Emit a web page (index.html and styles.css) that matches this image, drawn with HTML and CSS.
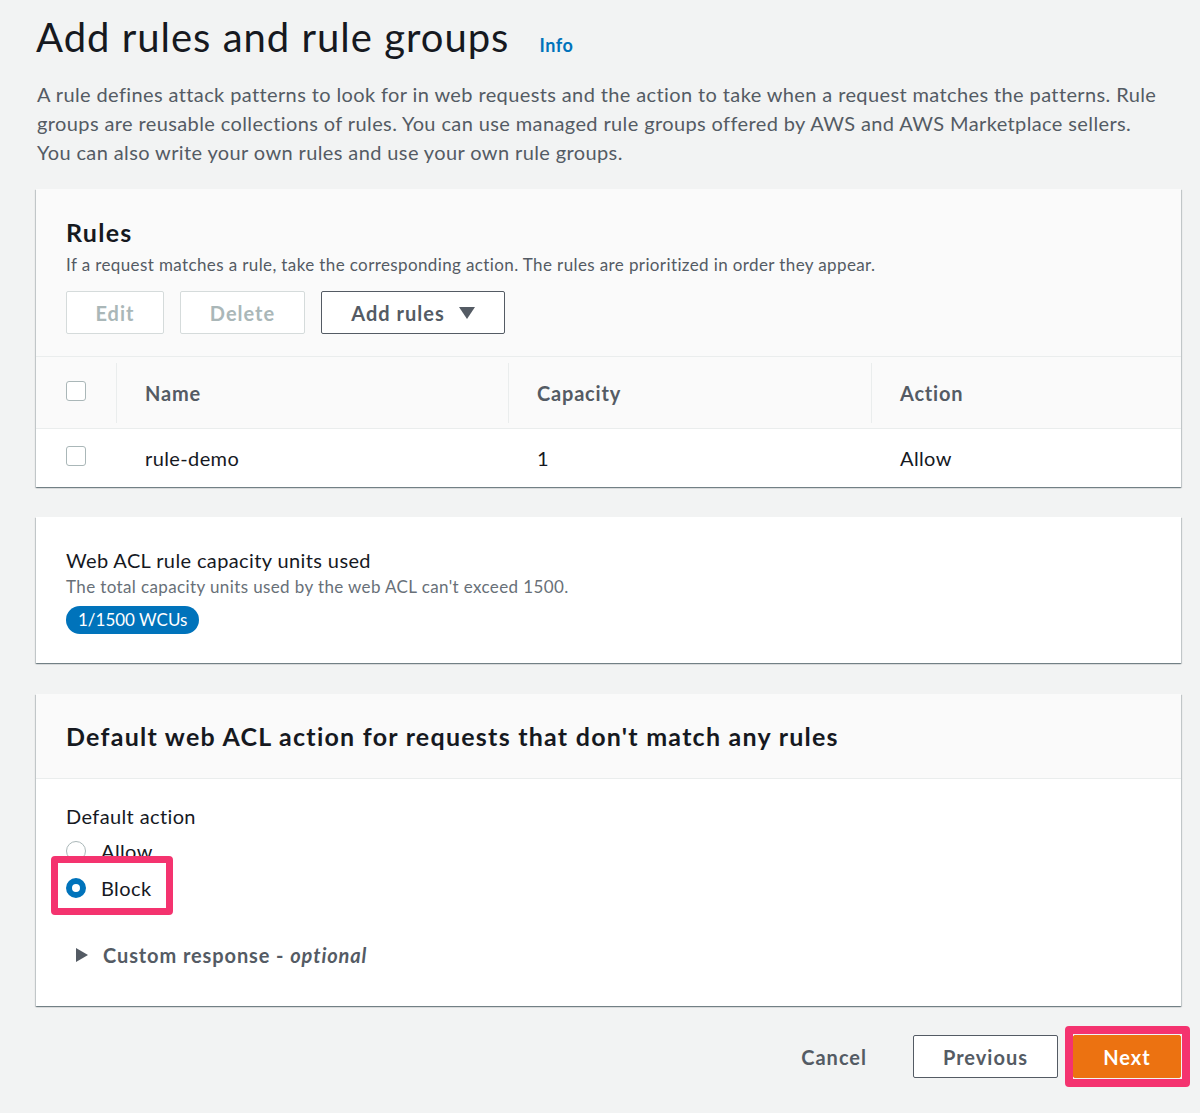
FILE: index.html
```html
<!DOCTYPE html>
<html lang="en">
<head>
<meta charset="utf-8">
<title>Add rules and rule groups</title>
<link rel="stylesheet" href="styles.css">
</head>
<body>
<main class="page">
  <header class="page-head">
    <h1 class="page-title">Add rules and rule groups</h1>
    <a class="info-link" href="#">Info</a>
  </header>
  <p class="page-desc">A rule defines attack patterns to look for in web requests and the action to take when a request matches the patterns. Rule groups are reusable collections of rules. You can use managed rule groups offered by AWS and AWS Marketplace sellers. You can also write your own rules and use your own rule groups.</p>

  <section class="panel">
    <div class="panel-head rules-head">
      <h2 class="panel-title">Rules</h2>
      <p class="panel-sub">If a request matches a rule, take the corresponding action. The rules are prioritized in order they appear.</p>
      <div class="btn-row">
        <button class="btn btn-disabled btn-edit">Edit</button>
        <button class="btn btn-disabled btn-delete">Delete</button>
        <button class="btn btn-normal btn-add">Add rules <span class="caret"></span></button>
      </div>
    </div>
    <div class="table">
      <div class="trow thead">
        <div class="cell cell-check"><span class="checkbox"></span></div>
        <div class="cell sep">Name</div>
        <div class="cell sep">Capacity</div>
        <div class="cell sep">Action</div>
      </div>
      <div class="trow tbody">
        <div class="cell cell-check"><span class="checkbox"></span></div>
        <div class="cell">rule-demo</div>
        <div class="cell">1</div>
        <div class="cell">Allow</div>
      </div>
    </div>
  </section>

  <section class="panel wcu-panel">
    <div class="wcu-title">Web ACL rule capacity units used</div>
    <div class="wcu-sub">The total capacity units used by the web ACL can't exceed 1500.</div>
    <span class="badge">1/1500 WCUs</span>
  </section>

  <section class="panel default-panel">
    <div class="panel-head default-head">
      <h2 class="panel-title">Default web ACL action for requests that don't match any rules</h2>
    </div>
    <div class="panel-body">
      <div class="field-label">Default action</div>
      <div class="radio-group">
        <label class="radio"><span class="radio-dot"></span>Allow</label>
        <label class="radio"><span class="radio-dot checked"></span>Block<span class="highlight hl-block"></span></label>
      </div>
      <div class="expander"><span class="tri"></span><span class="exp-text">Custom response - <em>optional</em></span></div>
    </div>
  </section>

  <footer class="actions">
    <button class="btn-link">Cancel</button>
    <button class="btn btn-normal btn-prev">Previous</button>
    <span class="next-wrap">
      <button class="btn btn-primary btn-next">Next</button>
      <span class="highlight hl-next"></span>
    </span>
  </footer>
</main>
</body>
</html>
```

FILE: styles.css
```css
* { box-sizing: border-box; }
html, body { margin: 0; padding: 0; }
body {
  background: #f2f3f3;
  font-family: Lato, "Open Sans", sans-serif;
  color: #16191f;
  letter-spacing: 0.024em;
}
.page {
  padding: 12px 19px 34px 36px;
  width: 1200px;
}
.page-head {
  display: flex;
  align-items: baseline;
  gap: 30px;
  height: 50px;
}
.page-title {
  margin: 0;
  font-size: 40px;
  font-weight: 400;
  line-height: 50px;
  color: #16191f;
  letter-spacing: 0.025em;
}
.info-link {
  font-size: 18px;
  font-weight: 700;
  color: #0073bb;
  text-decoration: none;
  letter-spacing: 0.03em;
}
.page-desc {
  margin: 18px 0 0 1px;
  font-size: 20px;
  line-height: 29px;
  color: #545b64;
  max-width: 1130px;
}
.panel {
  background: #fff;
  box-shadow: 0 1px 1px 0 rgba(0,28,36,.35), 1px 1px 1px 0 rgba(0,28,36,.15), -1px 1px 1px 0 rgba(0,28,36,.15);
  margin-top: 30px;
  position: relative;
}
.page-desc + .panel { margin-top: 22px; }
.panel-head {
  background: #fafafa;
  border-bottom: 1px solid #eaeded;
  padding: 27px 30px 22px;
}
.panel-title {
  margin: 0;
  font-size: 25px;
  line-height: 32px;
  font-weight: 700;
  color: #16191f;
  letter-spacing: 0.05em;
}
.panel-sub {
  margin: 5px 0 0;
  font-size: 17px;
  line-height: 24px;
  color: #545b64;
}
.btn-row {
  display: flex;
  gap: 16px;
  margin-top: 14px;
}
.btn {
  height: 43px;
  font-family: inherit;
  font-size: 20px;
  font-weight: 700;
  letter-spacing: 0.05em;
  border-radius: 2px;
  padding: 0;
  background: #fff;
  display: inline-flex;
  align-items: center;
  justify-content: center;
  position: relative;
}
.btn-disabled {
  border: 1px solid #d5dbdb;
  color: #aab7b8;
}
.btn-edit { width: 98px; }
.btn-delete { width: 125px; }
.btn-normal {
  border: 1px solid #545b64;
  color: #545b64;
}
.btn-add { width: 184px; gap: 14px; }
.caret {
  width: 0; height: 0;
  border-left: 8px solid transparent;
  border-right: 8px solid transparent;
  border-top: 12px solid #545b64;
}
.table { background: #fff; }
.trow {
  display: grid;
  grid-template-columns: 80px 392px 363px 1fr;
  align-items: center;
}
.thead {
  background: #fafafa;
  height: 72px;
  border-bottom: 1px solid #eaeded;
  font-weight: 700;
  color: #545b64;
  letter-spacing: 0.05em;
}
.tbody {
  height: 58px;
  color: #16191f;
}
.cell {
  font-size: 20px;
  padding-left: 29px;
  position: relative;
  line-height: 28px;
}
.thead .cell { padding-top: 0; }
.tbody .cell { padding-top: 0; }
.cell-check { padding-left: 30px; display: flex; align-items: center; }
.thead .cell-check { margin-top: -4px; }
.tbody .cell-check { margin-top: -4px; }
.sep::before {
  content: "";
  position: absolute;
  left: 0;
  top: -16px;
  bottom: -16px;
  border-left: 1px solid #eaeded;
}
.checkbox {
  display: inline-block;
  width: 20px; height: 20px;
  border: 1px solid #aab7b8;
  border-radius: 3px;
  background: #fff;
}
.wcu-panel {
  padding: 29px 30px 29px;
  display: flex;
  flex-direction: column;
  align-items: flex-start;
}
.wcu-title {
  font-size: 20px;
  line-height: 28px;
  color: #16191f;
}
.wcu-sub {
  font-size: 17px;
  line-height: 24px;
  margin-top: 1px;
  color: #687078;
}
.badge {
  display: block;
  margin-top: 7px;
  height: 28px;
  line-height: 28px;
  padding: 0 12px;
  border-radius: 14px;
  background: #0073bb;
  color: #fff;
  font-size: 17px;
  letter-spacing: 0;
}
.default-panel { margin-top: 31px; }
.default-head {
  padding: 26px 30px 26px;
}
.panel-body {
  padding: 23px 30px 37px;
}
.field-label {
  font-size: 20px;
  line-height: 28px;
  color: #16191f;
}
.radio-group {
  display: flex;
  flex-direction: column;
  gap: 9px;
  margin-top: 7px;
}
.radio {
  display: flex;
  align-items: center;
  gap: 15px;
  font-size: 20px;
  line-height: 28px;
  position: relative;
  width: max-content;
}
.radio-dot {
  width: 20px; height: 20px;
  border-radius: 50%;
  border: 1px solid #aab7b8;
  background: #fff;
}
.radio-dot.checked {
  border: 6px solid #0073bb;
}
.highlight {
  position: absolute;
  border: 7px solid #f4336f;
  border-radius: 4px;
  pointer-events: none;
}
.hl-block {
  left: -15px;
  top: -18px;
  width: 122px;
  height: 59px;
}
.expander {
  display: flex;
  align-items: center;
  gap: 15px;
  margin-top: 39px;
  padding-left: 10px;
  font-size: 20px;
  font-weight: 700;
  color: #545b64;
  line-height: 28px;
  letter-spacing: 0.045em;
}
.tri {
  width: 0; height: 0;
  border-top: 7px solid transparent;
  border-bottom: 7px solid transparent;
  border-left: 12px solid #545b64;
}
.exp-text em { font-style: italic; }
.actions {
  display: flex;
  justify-content: flex-end;
  align-items: center;
  margin-top: 29px;
}
.btn-link {
  background: none;
  border: none;
  font-family: inherit;
  font-size: 20px;
  font-weight: 700;
  letter-spacing: 0.05em;
  color: #545b64;
  padding: 0;
  margin-right: 46px;
}
.btn-prev { width: 145px; }
.next-wrap {
  position: relative;
  display: inline-flex;
  margin-left: 15px;
}
.btn-primary {
  background: #ec7211;
  border: 1px solid #ec7211;
  color: #fff;
  width: 108px;
}
.hl-next {
  left: -8px;
  top: -9px;
  width: 125px;
  height: 61px;
  border-width: 8px;
}
```
